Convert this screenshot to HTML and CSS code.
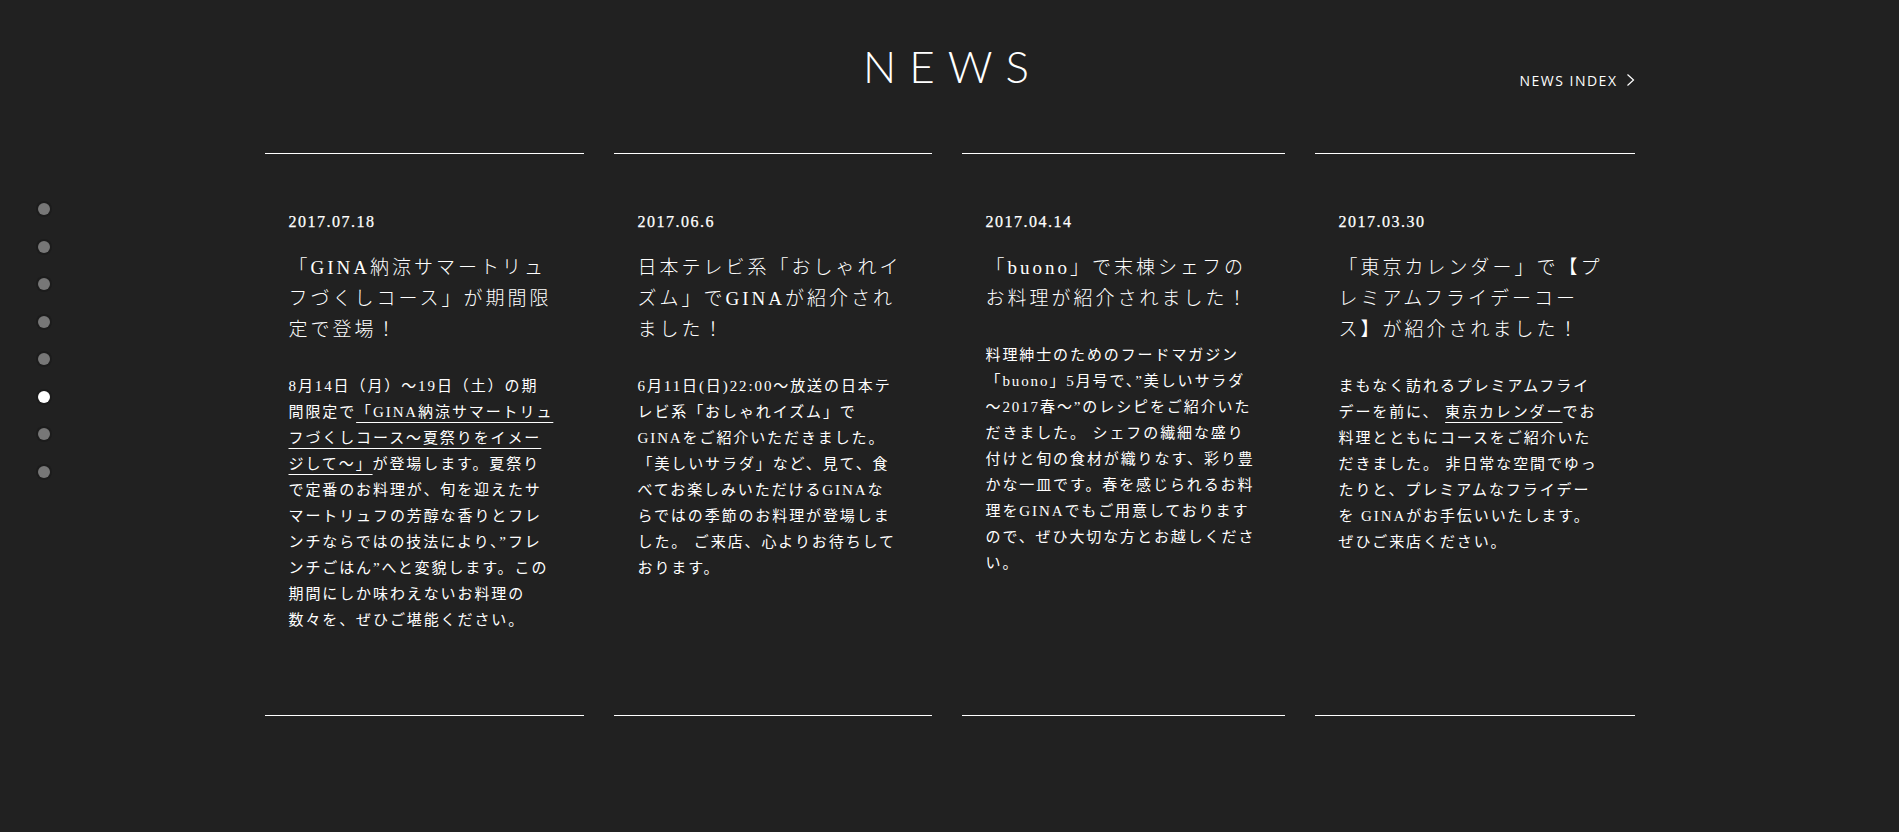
FILE: index.html
```html
<!DOCTYPE html>
<html lang="ja">
<head>
<meta charset="utf-8">
<title>NEWS</title>
<link rel="stylesheet" href="styles.css">
</head>
<body>
<nav class="dots">
  <span class="dot"></span>
  <span class="dot"></span>
  <span class="dot"></span>
  <span class="dot"></span>
  <span class="dot"></span>
  <span class="dot active"></span>
  <span class="dot"></span>
  <span class="dot"></span>
</nav>
<section class="news">
  <header class="news-head">
    <h1 class="news-title">NEWS</h1>
    <a class="news-index" href="#">NEWS INDEX<svg class="chev" width="9" height="14" viewBox="0 0 9 14"><polyline points="1.5,1.5 7.5,7 1.5,12.5" fill="none" stroke="#fff" stroke-width="1.2"/></svg></a>
  </header>
  <div class="news-list">
    <article class="news-item">
      <p class="date">2017.07.18</p>
      <h2 class="item-title">「GINA納涼サマートリュ<br>フづくしコース」が期間限<br>定で登場！</h2>
      <p class="item-body">8月14日（月）〜19日（土）の期<br>間限定で<a class="inline-link" href="#">「GINA納涼サマートリュ<br>フづくしコース〜夏祭りをイメー<br>ジして〜」</a>が登場します。夏祭り<br>で定番のお料理が、旬を迎えたサ<br>マートリュフの芳醇な香りとフレ<br>ンチならではの技法により、”フレ<br>ンチごはん”へと変貌します。この<br>期間にしか味わえないお料理の<br>数々を、ぜひご堪能ください。</p>
    </article>
    <article class="news-item">
      <p class="date">2017.06.6</p>
      <h2 class="item-title">日本テレビ系「おしゃれイ<br>ズム」でGINAが紹介され<br>ました！</h2>
      <p class="item-body">6月11日(日)22:00〜放送の日本テ<br>レビ系「おしゃれイズム」で<br>GINAをご紹介いただきました。<br>「美しいサラダ」など、見て、食<br>べてお楽しみいただけるGINAな<br>らではの季節のお料理が登場しま<br>した。 ご来店、心よりお待ちして<br>おります。</p>
    </article>
    <article class="news-item">
      <p class="date">2017.04.14</p>
      <h2 class="item-title">「buono」で末棟シェフの<br>お料理が紹介されました！</h2>
      <p class="item-body">料理紳士のためのフードマガジン<br>「buono」5月号で、”美しいサラダ<br>〜2017春〜”のレシピをご紹介いた<br>だきました。 シェフの繊細な盛り<br>付けと旬の食材が織りなす、彩り豊<br>かな一皿です。春を感じられるお料<br>理をGINAでもご用意しております<br>ので、ぜひ大切な方とお越しくださ<br>い。</p>
    </article>
    <article class="news-item">
      <p class="date">2017.03.30</p>
      <h2 class="item-title">「東京カレンダー」で【プ<br>レミアムフライデーコー<br>ス】が紹介されました！</h2>
      <p class="item-body">まもなく訪れるプレミアムフライ<br>デーを前に、 <a class="inline-link" href="#">東京カレンダー</a>でお<br>料理とともにコースをご紹介いた<br>だきました。 非日常な空間でゆっ<br>たりと、プレミアムなフライデー<br>を GINAがお手伝いいたします。<br>ぜひご来店ください。</p>
    </article>
  </div>
</section>
</body>
</html>
```

FILE: styles.css
```css
html, body {
  margin: 0;
  padding: 0;
  background: #212121;
}

body {
  font-family: "Liberation Serif", "Noto Sans CJK JP", serif;
  color: #fff;
  min-height: 832px;
}

/* side page navigation */
.dots {
  position: fixed;
  left: 38px;
  top: 203px;
  display: flex;
  flex-direction: column;
  gap: 25.5px;
}

.dot {
  display: block;
  width: 12px;
  height: 12px;
  border-radius: 50%;
  background: #777;
  box-shadow: 0 0 0 2px #1c1c1c;
}

.dot.active {
  background: #fff;
}

/* news section */
.news {
  width: 1370px;
  margin: 0 auto;
  padding-top: 44px;
}

.news-head {
  display: grid;
  grid-template-columns: 1fr auto 1fr;
  align-items: end;
}

.news-title {
  grid-column: 2;
  margin: 0;
  padding-left: 6px;
  font-family: Lato, "Open Sans", sans-serif;
  font-weight: 300;
  font-size: 44px;
  line-height: 44px;
  letter-spacing: 13px;
  color: #fff;
}

.news-index {
  grid-column: 3;
  justify-self: end;
  display: flex;
  align-items: center;
  font-family: "Open Sans", sans-serif;
  font-size: 14px;
  line-height: 14px;
  letter-spacing: 1.5px;
  color: #fff;
  text-decoration: none;
}

.chev {
  margin-left: 8px;
  margin-top: -2px;
}

.news-list {
  margin-top: 65px;
  display: grid;
  grid-template-columns: 319fr 318fr 323fr 320fr;
  column-gap: 30px;
}

.news-item {
  border-top: 1px solid #fff;
  border-bottom: 1px solid #fff;
  padding: 58px 10px 82px 24px;
}

.date {
  margin: 0;
  font-size: 16px;
  line-height: 20px;
  letter-spacing: 1.5px;
  -webkit-text-stroke: 0.25px #fff;
}

.item-title {
  margin: 20px 0 28px;
  font-size: 19px;
  font-weight: 300;
  line-height: 31px;
  letter-spacing: 3px;
  white-space: nowrap;
}

.item-body {
  margin: 0;
  font-size: 15px;
  font-weight: 400;
  line-height: 26px;
  letter-spacing: 1.9px;
  white-space: nowrap;
}

.inline-link {
  color: #fff;
  text-decoration: underline;
  text-decoration-thickness: 1px;
  text-underline-offset: 5px;
}
```
